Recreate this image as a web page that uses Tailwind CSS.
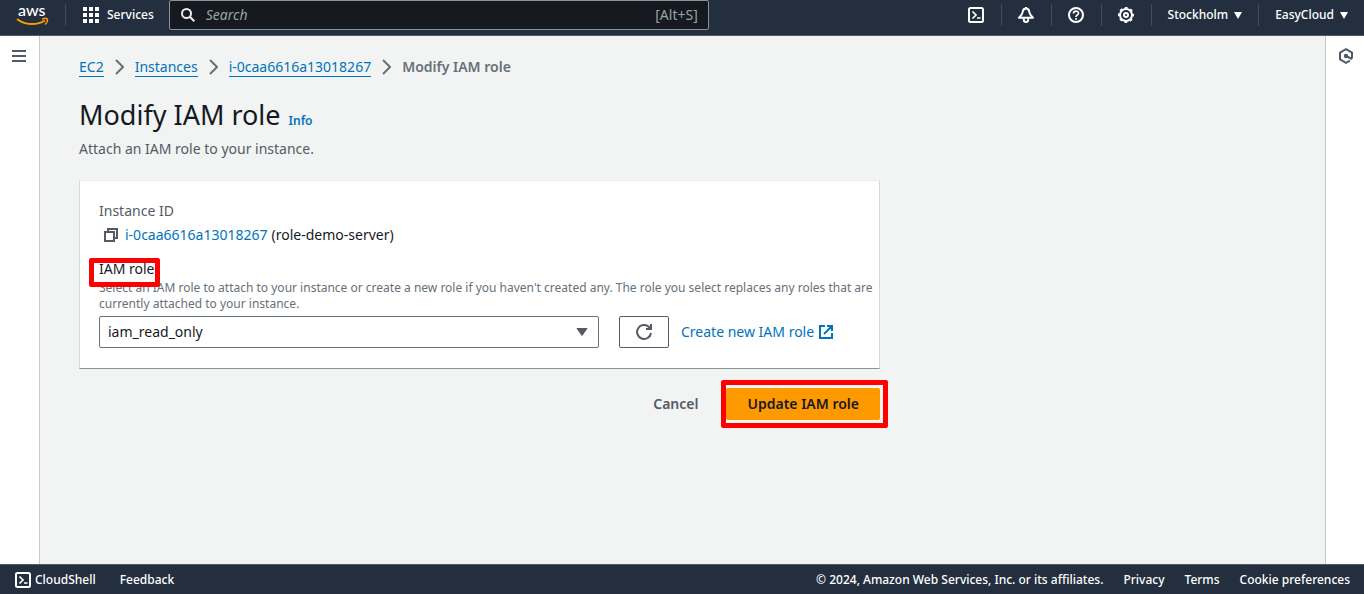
<!DOCTYPE html>
<html lang="en">
<head>
  <meta charset="UTF-8">
  <meta name="viewport" content="width=device-width, initial-scale=1.0">
  <title>Modify IAM role | EC2</title>
  <script src="https://cdn.jsdelivr.net/npm/@tailwindcss/browser@4"></script>
</head>
<body class="min-h-screen flex flex-col bg-[#f2f3f3] font-['Noto_Sans',sans-serif] text-sm leading-5 text-[#16191f]">

  <!-- Top navigation -->
  <header class="h-9 flex items-start justify-between bg-[#232f3e] border-b border-[#545b64] text-white text-xs font-medium">
    <div class="h-[30px] flex items-center">
      <a href="#" aria-label="AWS home" class="ml-4">
        <svg class="w-[33px] h-[30px]" viewBox="0 0 33 30" fill="none">
          <text x="2" y="16" font-family="Lato, sans-serif" font-size="16" font-weight="500" fill="#fff">aws</text>
          <path d="M1 19c8 6.500 20 6.500 28 1.500" stroke="#f90" stroke-width="2"/>
          <path d="M26 19.300c2-1 4.500-1 5.300-.3.4 1.500-.5 4-2.300 5.500" stroke="#f90" stroke-width="1.500"/>
        </svg>
      </a>
      <span class="ml-4 w-px h-[22px] bg-[#414d5c]"></span>
      <button type="button" class="ml-[17px] flex items-center gap-2">
        <svg class="w-4 h-4" viewBox="0 0 16 16" fill="currentColor">
          <path d="M0 0h4v4H0zM6 0h4v4H6zM12 0h4v4h-4zM0 6h4v4H0zM6 6h4v4H6zM12 6h4v4h-4zM0 12h4v4H0zM6 12h4v4H6zM12 12h4v4h-4z"/>
        </svg>
        Services
      </button>
      <label class="ml-[15px] w-[540px] h-[30px] flex items-center px-2.5 gap-2.5 bg-[#16191f] border border-[#879596] rounded-xs text-sm font-normal text-[#95a5a6]">
        <svg class="w-4 h-4 shrink-0 text-[#eaeded]" viewBox="0 0 16 16" fill="none" stroke="currentColor" stroke-width="2">
          <circle cx="6.500" cy="6.500" r="4.500"/><path d="M9.800 9.800 14.300 14.300"/>
        </svg>
        <input type="search" placeholder="Search" aria-label="Search" class="flex-1 min-w-0 bg-transparent outline-none italic placeholder:text-[#95a5a6]">
        <span>[Alt+S]</span>
      </label>
    </div>

    <nav class="h-[30px] flex items-center">
      <button type="button" aria-label="CloudShell" class="w-[50px] h-[22px] flex items-center justify-center border-r border-[#414d5c]">
        <svg class="w-4 h-4" viewBox="0 0 16 16" fill="none" stroke="currentColor" stroke-width="2">
          <rect x="1" y="1" width="14" height="14" rx="1.500"/><path d="M4.500 4.500 8 8l-3.500 3.500M9 11h3.500" stroke-width="1.700"/>
        </svg>
      </button>
      <button type="button" aria-label="Notifications" class="w-[50px] h-[22px] flex items-center justify-center border-r border-[#414d5c]">
        <svg class="w-4 h-4" viewBox="0 0 16 16" fill="none" stroke="currentColor" stroke-width="2" stroke-linejoin="round">
          <path d="M8 1.500C5.800 1.500 4.900 3 4.700 5 4.400 7.500 3 9 1 10.800h14C13 9 11.600 7.500 11.300 5 11.100 3 10.200 1.500 8 1.500zM8 0v2"/>
          <path d="M5.800 11.500v1.300a2.200 2.200 0 0 0 4.400 0v-1.300"/>
        </svg>
      </button>
      <button type="button" aria-label="Help" class="w-[50px] h-[22px] flex items-center justify-center border-r border-[#414d5c]">
        <svg class="w-4 h-4" viewBox="0 0 16 16" fill="none" stroke="currentColor" stroke-width="2">
          <circle cx="8" cy="8" r="7"/><path d="M5.500 6.500C5.500 3.300 10.500 3.300 10.500 6.300 10.500 8 8 7.800 8 10M8 11v1.700" stroke-width="1.700"/>
        </svg>
      </button>
      <button type="button" aria-label="Settings" class="w-[50px] h-[22px] flex items-center justify-center border-r border-[#414d5c]">
        <svg class="w-4 h-4" viewBox="0 0 16 16" fill="none" stroke="currentColor" stroke-width="2">
          <circle cx="8" cy="8" r="6"/>
          <circle cx="8" cy="8" r="7.200" stroke-width="1.600" stroke-dasharray="2.830 2.830" stroke-dashoffset="1.400"/>
          <circle cx="8" cy="8" r="2"/>
        </svg>
      </button>
      <button type="button" class="h-[22px] flex items-center gap-1.5 pl-4 pr-4 border-r border-[#414d5c]">
        Stockholm
        <svg class="w-2 h-[7px]" viewBox="0 0 8 7" fill="currentColor"><path d="M0 0h8L4 7z"/></svg>
      </button>
      <button type="button" class="h-[22px] flex items-center gap-1.5 pl-4 pr-4">
        EasyCloud
        <svg class="w-2 h-[7px]" viewBox="0 0 8 7" fill="currentColor"><path d="M0 0h8L4 7z"/></svg>
      </button>
    </nav>
  </header>

  <div class="flex-1 flex">
    <aside class="w-10 shrink-0 bg-white border-r border-[#c6cacc]">
      <button type="button" aria-label="Open navigation" class="block ml-3 mt-3 text-[#545b64]">
        <svg class="w-[14px] h-4" viewBox="0 0 14 16" stroke="currentColor" stroke-width="2"><path d="M0 3h14M0 8h14M0 13h14"/></svg>
      </button>
    </aside>

    <main class="flex-1 pl-[39px] pr-10 pt-[21px]">
      <nav aria-label="Breadcrumb">
        <ol class="flex items-center gap-[11px] text-[#0073bb]">
          <li><a href="#" class="border-b">EC2</a></li>
          <li aria-hidden="true" class="text-[#687078]"><svg class="w-[9px] h-4" viewBox="0 0 9 16" fill="none" stroke="currentColor" stroke-width="2"><path d="M1 1l7 7-7 7"/></svg></li>
          <li><a href="#" class="border-b">Instances</a></li>
          <li aria-hidden="true" class="text-[#687078]"><svg class="w-[9px] h-4" viewBox="0 0 9 16" fill="none" stroke="currentColor" stroke-width="2"><path d="M1 1l7 7-7 7"/></svg></li>
          <li><a href="#" class="border-b">i-0caa6616a13018267</a></li>
          <li aria-hidden="true" class="text-[#687078]"><svg class="w-[9px] h-4" viewBox="0 0 9 16" fill="none" stroke="currentColor" stroke-width="2"><path d="M1 1l7 7-7 7"/></svg></li>
          <li class="font-semibold text-[#687078]">Modify IAM role</li>
        </ol>
      </nav>

      <div class="mt-5 flex items-baseline gap-2">
        <h1 class="text-[27px] leading-9">Modify IAM role</h1>
        <a href="#" class="text-xs font-semibold text-[#0073bb]">Info</a>
      </div>
      <p class="mt-1.5 text-[#545b64]">Attach an IAM role to your instance.</p>

      <form class="max-w-[801px]">
        <section class="mt-[21px] bg-white border border-t-[#eaeded] border-x-[#d5dbdb] border-b-[#879596] pl-[19px] pr-1 py-5">
          <h2 class="text-[#545b64]">Instance ID</h2>
          <div class="mt-1 flex items-center gap-1">
            <button type="button" aria-label="Copy instance ID" class="ml-1 mr-0.5 text-[#545b64]">
              <svg class="block w-4 h-4" viewBox="0 0 16 16" fill="none" stroke="currentColor" stroke-width="2"><path d="M2 5h9v9H2z"/><path d="M5 5V2h9v9h-3"/></svg>
            </button>
            <a href="#" class="text-[#0073bb]">i-0caa6616a13018267</a>
            <span>(role-demo-server)</span>
          </div>

          <div class="relative mt-[14px]">
            <label for="iamRole">IAM role</label>
            <span class="absolute -left-2.5 -top-px w-[71px] h-[29px] border-[5px] border-[#f00] rounded-xs"></span>
          </div>
          <p class="mt-px text-xs leading-4 text-[#687078]">Select an IAM role to attach to your instance or create a new role if you haven't created any. The role you select replaces any roles that are<br>currently attached to your instance.</p>
          <div class="mt-1 flex items-center">
            <div class="relative w-[500px]">
              <select id="iamRole" class="appearance-none w-full h-8 px-2 bg-white border border-[#687078] rounded-xs">
                <option>iam_read_only</option>
              </select>
              <svg class="absolute right-[11px] top-3 w-3 h-2 text-[#545b64] pointer-events-none" viewBox="0 0 12 8" fill="currentColor" stroke="currentColor" stroke-linejoin="round"><path d="M1 .5h10l-5 7z"/></svg>
            </div>
            <button type="button" aria-label="Refresh roles" class="ml-5 w-[50px] h-8 flex items-center justify-center border border-[#545b64] rounded-xs text-[#545b64]">
              <svg class="w-4 h-4" viewBox="0 0 16 16" fill="none" stroke="currentColor" stroke-width="2"><path d="M15 9a7 7 0 1 1-2-6l1.500 2M10 5h5V0"/></svg>
            </button>
            <a href="#" class="ml-3 flex items-center gap-1 text-[#0073bb]">
              Create new IAM role
              <svg class="w-4 h-4" viewBox="0 0 16 16" fill="none" stroke="currentColor" stroke-width="2"><path d="M7 2H2v12h12V9M9 2h5v5M14 2 6 10"/></svg>
            </a>
          </div>
        </section>

        <div class="mt-[19px] flex justify-end gap-2 font-semibold">
          <button type="button" class="h-8 px-5 text-[#545b64]">Cancel</button>
          <div class="relative">
            <button type="submit" class="h-8 px-[21px] bg-[#f90] rounded-xs">Update IAM role</button>
            <span class="absolute -left-[5px] -right-2 -inset-y-2 border-[5px] border-[#f00] rounded-xs pointer-events-none"></span>
          </div>
        </div>
      </form>
    </main>

    <aside class="w-[39px] shrink-0 bg-white border-l border-[#c6cacc]">
      <button type="button" aria-label="Open tools" class="block ml-3 mt-3 text-[#545b64]">
        <svg class="w-4 h-4" viewBox="0 0 16 16" fill="none" stroke="currentColor" stroke-width="2"><path d="M14 10.500v-6L8 1.200 2 4.500v7l6 3.300 4-2.200"/><path d="M8 8l6 3"/><circle cx="8" cy="8" r="1.200" fill="currentColor"/></svg>
      </button>
    </aside>
  </div>

  <!-- Footer -->
  <footer class="h-[30px] pl-[15px] pr-3.5 flex items-center justify-between bg-[#232f3e] border-t border-[#545b64] text-white text-xs font-medium">
    <div class="flex items-center gap-6">
      <button type="button" class="flex items-center gap-1">
        <svg class="w-4 h-4" viewBox="0 0 16 16" fill="none" stroke="currentColor" stroke-width="2">
          <rect x="1" y="1" width="14" height="14" rx="1.500"/><path d="M4.500 4.500 8 8l-3.500 3.500M9 11h3.500" stroke-width="1.700"/>
        </svg>
        CloudShell
      </button>
      <a href="#">Feedback</a>
    </div>
    <div class="flex items-center gap-5">
      <span>© 2024, Amazon Web Services, Inc. or its affiliates.</span>
      <a href="#">Privacy</a>
      <a href="#">Terms</a>
      <a href="#">Cookie preferences</a>
    </div>
  </footer>
</body>
</html>
